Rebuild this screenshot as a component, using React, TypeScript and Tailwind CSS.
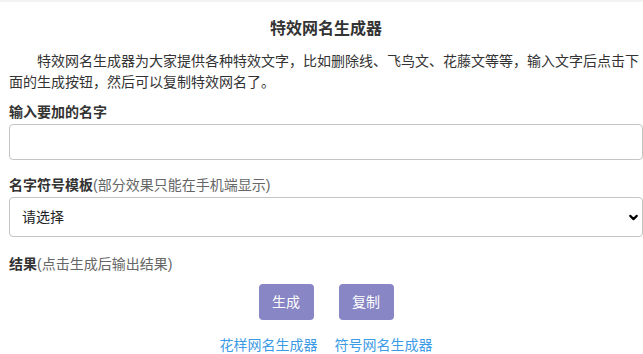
import { ChevronDown } from 'lucide-react';

const font = { fontFamily: '"Liberation Sans", "Noto Sans CJK SC", sans-serif' };

export default function App() {
  return (
    <div className="min-h-screen bg-white text-[#333] border-t-2 border-[#f3f3f3]" style={font}>
      <div className="pl-[9px]">
        <h1 className="pt-[15px] text-center text-[16px] font-bold leading-[24px]">特效网名生成器</h1>

        <p className="mt-[10px] indent-[28px] text-[14px] leading-[21px]">
          特效网名生成器为大家提供各种特效文字，比如删除线、飞鸟文、花藤文等等，输入文字后点击下面的生成按钮，然后可以复制特效网名了。
        </p>

        <label className="mt-[9px] block text-[14px] font-bold leading-[20px]">输入要加的名字</label>
        <input
          type="text"
          className="mt-[2px] block h-[36px] w-full rounded-[4px] border border-[#c4c4c4] px-3 text-[14px] outline-none"
        />

        <div className="mt-[15px] text-[14px] leading-[20px]">
          <span className="font-bold">名字符号模板</span>
          <span className="text-[#666]">(部分效果只能在手机端显示)</span>
        </div>
        <div className="mt-[2px] flex h-[40px] w-full items-center justify-between rounded-[4px] border border-[#c4c4c4] pl-[12px] pr-[2px] text-[14px] text-[#222]">
          <span>请选择</span>
          <ChevronDown className="h-[13px] w-[13px] text-black" strokeWidth={4} />
        </div>

        <div className="mt-[17px] text-[14px] leading-[20px]">
          <span className="font-bold">结果</span>
          <span className="text-[#666]">(点击生成后输出结果)</span>
        </div>

        <div className="mt-[10px] flex justify-center gap-[25px]">
          <button className="h-[36px] w-[55px] rounded-[4px] bg-[#8886c5] text-[14px] text-white">生成</button>
          <button className="h-[36px] w-[55px] rounded-[4px] bg-[#8886c5] text-[14px] text-white">复制</button>
        </div>

        <div className="mt-[15px] flex justify-center gap-[17px] text-[14px] leading-[20px] text-[#3c9be6]">
          <a href="#">花样网名生成器</a>
          <a href="#">符号网名生成器</a>
        </div>
      </div>
    </div>
  );
}
